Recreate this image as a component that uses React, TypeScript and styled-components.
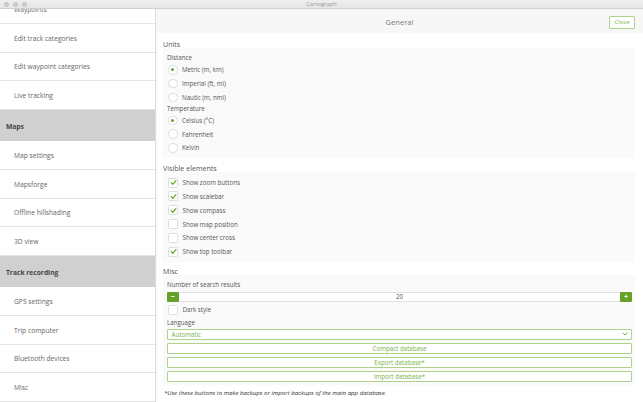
import React from "react";
import styled, { createGlobalStyle } from "styled-components";

const GREEN = "#66a22a";
const GREEN_TEXT = "#7ab24a";
const GREEN_BORDER = "#add38a";
const LABEL_SIZE = "6.2px";

const GlobalStyle = createGlobalStyle`
  html, body { margin: 0; padding: 0; background: #fff; }
  body { font-family: "Open Sans", "Noto Sans", sans-serif; }
  * { box-sizing: border-box; }
`;

const Window = styled.div`
  width: 643px;
  height: 402px;
  display: flex;
  flex-direction: column;
  overflow: hidden;
  background: #fff;
`;

const TitleBar = styled.div`
  height: 9px;
  flex: none;
  display: grid;
  grid-template-columns: 1fr auto 1fr;
  align-items: center;
  background: linear-gradient(#eeeeee, #e6e6e6);
  border-bottom: 1px solid #d2d2d2;
`;

const Lights = styled.div`
  display: flex;
  gap: 4px;
  padding-left: 3.5px;
`;

const Light = styled.span`
  width: 5px;
  height: 5px;
  border-radius: 50%;
  background: #cfcfcf;
  border: 0.5px solid #c2c2c2;
`;

const WindowTitle = styled.div`
  font-size: 5.8px;
  color: #9a9a9a;
  line-height: 8px;
`;

const Body = styled.div`
  flex: 1;
  min-height: 0;
  display: flex;
`;

const Sidebar = styled.nav`
  width: 156px;
  flex: none;
  border-right: 1px solid #dcdcdc;
  overflow: hidden;
  box-shadow: 1px 0 2px rgba(0, 0, 0, 0.04);
`;

const SideList = styled.div`
  margin-top: -13.67px;
  display: flex;
  flex-direction: column;
`;

const SideItem = styled.div<{ $header?: boolean }>`
  flex: none;
  height: ${(p) => (p.$header ? "31.33px" : "28.67px")};
  display: flex;
  align-items: center;
  padding-left: ${(p) => (p.$header ? "6px" : "14px")};
  padding-top: 1px;
  font-size: 6.7px;
  font-weight: ${(p) => (p.$header ? 700 : 400)};
  color: ${(p) => (p.$header ? "#454545" : "#666")};
  background: ${(p) => (p.$header ? "#d0d0d0" : "#fff")};
  border-bottom: ${(p) => (p.$header ? "none" : "1px solid #e4e4e4")};
`;

const Main = styled.main`
  flex: 1;
  min-width: 0;
  display: flex;
  flex-direction: column;
`;

const Header = styled.div`
  height: 24px;
  flex: none;
  display: grid;
  grid-template-columns: 1fr auto 1fr;
  align-items: center;
  padding-top: 2px;
  background: #f7f7f7;
`;

const HeaderTitle = styled.div`
  grid-column: 2;
  font-size: 7.4px;
  color: #777;
  letter-spacing: 0.1px;
`;

const CloseButton = styled.button`
  grid-column: 3;
  justify-self: end;
  margin-right: 8px;
  width: 26px;
  height: 13px;
  padding: 0;
  border: 1px solid ${GREEN_BORDER};
  border-radius: 1px;
  background: #fff;
  color: ${GREEN_TEXT};
  font-family: inherit;
  font-size: 6px;
`;

const Content = styled.div`
  padding: 0 8px 0 7px;
  display: flex;
  flex-direction: column;
`;

const SectionTitle = styled.div<{ $h: number }>`
  height: ${(p) => p.$h}px;
  display: flex;
  align-items: flex-end;
  line-height: 8px;
  font-size: 7.1px;
  color: #555;
`;

const Box = styled.div`
  background: #fafafa;
  padding: 4px 3px 3px 4px;
  display: flex;
  flex-direction: column;
`;

const SubLabel = styled.div<{ $h?: number }>`
  height: ${(p) => p.$h ?? 11}px;
  display: flex;
  align-items: center;
  font-size: ${LABEL_SIZE};
  color: #555;
`;

const OptionRow = styled.div<{ $h?: number }>`
  height: ${(p) => p.$h ?? 14}px;
  display: flex;
  align-items: center;
  gap: 4.5px;
  padding-left: 1px;
  font-size: ${LABEL_SIZE};
  color: #555;
`;

const RadioCircle = styled.span<{ $on?: boolean }>`
  width: 9.5px;
  height: 9.5px;
  border-radius: 50%;
  border: 1px solid #dedede;
  background: #fff;
  display: flex;
  align-items: center;
  justify-content: center;
  &::after {
    content: "";
    width: 3.2px;
    height: 3.2px;
    border-radius: 50%;
    background: ${(p) => (p.$on ? GREEN : "transparent")};
  }
`;

const CheckSquare = styled.span`
  width: 10px;
  height: 10px;
  border: 1px solid #dedede;
  border-radius: 1.5px;
  background: #fff;
  display: flex;
  align-items: center;
  justify-content: center;
`;

const Stepper = styled.div`
  height: 10px;
  margin: 2px 0 1px;
  display: flex;
`;

const StepButton = styled.button`
  width: 12px;
  height: 10px;
  padding: 0;
  border: none;
  border-radius: 1px;
  background: ${GREEN};
  color: #fff;
  font-family: inherit;
  font-size: 7px;
  font-weight: 700;
  line-height: 10px;
`;

const StepValue = styled.div`
  flex: 1;
  border-top: 1px solid #e2e2e2;
  border-bottom: 1px solid #e2e2e2;
  background: #fff;
  display: flex;
  align-items: center;
  justify-content: center;
  font-size: ${LABEL_SIZE};
  color: #555;
`;

const Select = styled.div`
  height: 11px;
  margin-top: 1px;
  border: 1px solid ${GREEN_BORDER};
  border-radius: 1px;
  background: #fff;
  display: flex;
  align-items: center;
  justify-content: space-between;
  padding: 0 3px 0 3.5px;
  font-size: ${LABEL_SIZE};
  color: ${GREEN_TEXT};
`;

const ActionButton = styled.button`
  height: 11px;
  margin-top: 3px;
  padding: 0;
  border: 1px solid ${GREEN_BORDER};
  border-radius: 1px;
  background: #fff;
  color: ${GREEN_TEXT};
  font-family: inherit;
  font-size: ${LABEL_SIZE};
`;

const Footnote = styled.div`
  margin-top: 4.5px;
  padding-left: 1px;
  line-height: 8px;
  font-size: 6.1px;
  font-style: italic;
  color: #333;
`;

const Check = () => (
  <svg width="7" height="7" viewBox="0 0 10 10">
    <polyline
      points="1.8,5.3 4,7.6 8.4,2.4"
      fill="none"
      stroke={GREEN}
      strokeWidth="1.7"
      strokeLinecap="round"
      strokeLinejoin="round"
    />
  </svg>
);

const Chevron = () => (
  <svg width="6" height="4" viewBox="0 0 12 8">
    <polyline points="1.5,1.5 6,6 10.5,1.5" fill="none" stroke={GREEN} strokeWidth="1.8" />
  </svg>
);

const sideItems: { label: string; header?: boolean }[] = [
  { label: "Waypoints" },
  { label: "Edit track categories" },
  { label: "Edit waypoint categories" },
  { label: "Live tracking" },
  { label: "Maps", header: true },
  { label: "Map settings" },
  { label: "Mapsforge" },
  { label: "Offline hillshading" },
  { label: "3D view" },
  { label: "Track recording", header: true },
  { label: "GPS settings" },
  { label: "Trip computer" },
  { label: "Bluetooth devices" },
  { label: "Misc" },
];

const Radio = ({ label, on }: { label: string; on?: boolean }) => (
  <OptionRow $h={13.8}>
    <RadioCircle $on={on} />
    {label}
  </OptionRow>
);

const Checkbox = ({ label, on, h }: { label: string; on?: boolean; h?: number }) => (
  <OptionRow $h={h ?? 13.8}>
    <CheckSquare>{on && <Check />}</CheckSquare>
    {label}
  </OptionRow>
);

export default function App() {
  return (
    <>
      <GlobalStyle />
      <Window>
        <TitleBar>
          <Lights>
            <Light />
            <Light />
            <Light />
          </Lights>
          <WindowTitle>Cartograph</WindowTitle>
        </TitleBar>
        <Body>
          <Sidebar>
            <SideList>
              {sideItems.map((it) => (
                <SideItem key={it.label} $header={it.header}>
                  {it.label}
                </SideItem>
              ))}
            </SideList>
          </Sidebar>
          <Main>
            <Header>
              <HeaderTitle>General</HeaderTitle>
              <CloseButton>Close</CloseButton>
            </Header>
            <Content>
              <SectionTitle $h={15}>Units</SectionTitle>
              <Box>
                <SubLabel>Distance</SubLabel>
                <Radio label="Metric (m, km)" on />
                <Radio label="Imperial (ft, mi)" />
                <Radio label="Nautic (m, nmi)" />
                <SubLabel $h={9}>Temperature</SubLabel>
                <Radio label="Celsius (°C)" on />
                <Radio label="Fahrenheit" />
                <Radio label="Kelvin" />
              </Box>
              <SectionTitle $h={14}>Visible elements</SectionTitle>
              <Box>
                <Checkbox label="Show zoom buttons" on />
                <Checkbox label="Show scalebar" on />
                <Checkbox label="Show compass" on />
                <Checkbox label="Show map position" />
                <Checkbox label="Show center cross" />
                <Checkbox label="Show top toolbar" on />
              </Box>
              <SectionTitle $h={13}>Misc</SectionTitle>
              <Box>
                <SubLabel>Number of search results</SubLabel>
                <Stepper>
                  <StepButton>−</StepButton>
                  <StepValue>20</StepValue>
                  <StepButton>+</StepButton>
                </Stepper>
                <Checkbox label="Dark style" h={14} />
                <SubLabel>Language</SubLabel>
                <Select>
                  Automatic
                  <Chevron />
                </Select>
                <ActionButton>Compact database</ActionButton>
                <ActionButton>Export database*</ActionButton>
                <ActionButton>Import database*</ActionButton>
              </Box>
              <Footnote>
                *Use these buttons to make backups or import backups of the main app database.
              </Footnote>
            </Content>
          </Main>
        </Body>
      </Window>
    </>
  );
}
